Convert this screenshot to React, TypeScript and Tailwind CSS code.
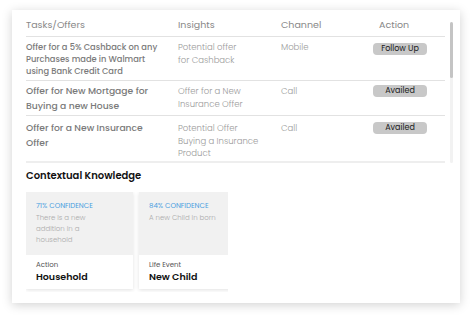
import React from "react";

const rows = [
  {
    task: "Offer for a 5% Cashback on any Purchases made in Walmart using Bank Credit Card",
    small: true,
    insight: ["Potential offer", "for Cashback"],
    channel: "Mobile",
    action: "Follow Up",
    h: "h-[44px] pt-[4px]",
  },
  {
    task: "Offer for New Mortgage for Buying a new House",
    small: false,
    insight: ["Offer for a New", "Insurance Offer"],
    channel: "Call",
    action: "Availed",
    h: "h-[35px] pt-[2px]",
  },
  {
    task: "Offer for a New Insurance Offer",
    small: false,
    insight: ["Potential Offer", "Buying a Insurance", "Product"],
    channel: "Call",
    action: "Availed",
    h: "h-[47px] pt-[4px]",
  },
];

const cards = [
  { conf: "71% CONFIDENCE", desc: "There is a new addition in a household", label: "Action", title: "Household" },
  { conf: "84% CONFIDENCE", desc: "A new Child in born", label: "Life Event", title: "New Child" },
];

const App: React.FC = () => {
  return (
    <div className="w-[472px] h-[318px] bg-white pt-[10px] pl-[12px] font-['Poppins','Open_Sans',sans-serif]">
      <div className="w-[448px] h-[293px] bg-white shadow-[0_2px_10px_rgba(0,0,0,0.18)] pl-[14px] flex flex-col">
        {/* Table + scrollbar */}
        <div className="flex">
          <div className="w-[419px]">
            <div className="flex h-[27px] items-end pb-[4px] border-b border-[#e2e2e2] text-[9.5px] text-[#888]">
              <div className="w-[152px]">Tasks/Offers</div>
              <div className="w-[103px]">Insights</div>
              <div className="w-[92px]">Channel</div>
              <div className="w-[72px] pl-[6px]">Action</div>
            </div>
            {rows.map((r, i) => (
              <div
                key={i}
                className={`flex ${r.h} ${i < rows.length - 1 ? "border-b border-[#e2e2e2]" : "border-b-2 border-[#eeeeee]"}`}
              >
                <div
                  className={`w-[152px] pr-[14px] font-medium text-[#7a7a7a] ${
                    r.small ? "text-[8.3px] leading-[12px]" : "text-[9.2px] leading-[15px]"
                  }`}
                >
                  {r.task}
                </div>
                <div className={`w-[103px] text-[8.5px] leading-[12.5px] text-[#9a9a9a] font-light whitespace-nowrap ${r.small ? "" : "pt-[2px]"}`}>
                  {r.insight.map((l, j) => (
                    <div key={j}>{l}</div>
                  ))}
                </div>
                <div className={`w-[92px] text-[8.5px] leading-[12px] text-[#9a9a9a] font-light ${r.small ? "" : "pt-[2px]"}`}>{r.channel}</div>
                <div className="w-[72px] pt-[2px]">
                  <div className="w-[54px] h-[12px] rounded-[4px] bg-[#c8c8c8] text-[8px] leading-[12px] text-[#1a1a1a] text-center">
                    {r.action}
                  </div>
                </div>
              </div>
            ))}
          </div>
          <div className="ml-[5px] mt-[12px] w-[3px] h-[141px] bg-[#f2f2f2] rounded-full">
            <div className="w-[3px] h-[56px] bg-[#c4c4c4] rounded-full" />
          </div>
        </div>

        <div className="mt-[6px] text-[10px] font-semibold text-[#111] leading-[14px]">Contextual Knowledge</div>

        <div className="mt-[9px] w-[202px] h-[100px] overflow-hidden flex gap-[6px]">
          {cards.map((c, i) => (
            <div key={i} className="w-[107px] h-[97px] shrink-0 bg-white shadow-[0_1px_4px_rgba(0,0,0,0.12)] flex flex-col">
              <div className="h-[63px] bg-[#f1f1f1] px-[10px] pt-[9px]">
                <div className="text-[7px] leading-[9px] text-[#4a9ee0]">{c.conf}</div>
                <div className="mt-[2px] text-[7px] leading-[11px] text-[#ababab] font-light pr-[14px]">{c.desc}</div>
              </div>
              <div className="px-[10px] pt-[5px]">
                <div className="text-[7px] leading-[10px] text-[#555]">{c.label}</div>
                <div className="text-[9.5px] leading-[13px] font-semibold text-[#111]">{c.title}</div>
              </div>
            </div>
          ))}
        </div>
      </div>
    </div>
  );
};

export default App;
